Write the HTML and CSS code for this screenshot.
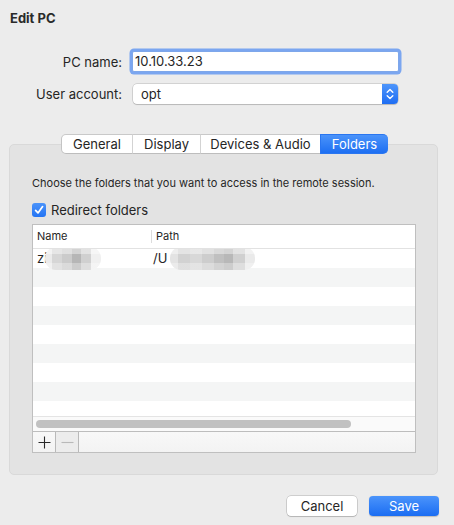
FILE: index.html
```html
<!DOCTYPE html>
<html>
<head>
<meta charset="utf-8">
<link rel="stylesheet" href="styles.css">
</head>
<body>
<div class="window">
  <div class="title">Edit PC</div>
  <div class="form">
    <div class="row">
      <span class="lbl">PC name:</span>
      <div class="input">10.10.33.23</div>
    </div>
    <div class="row row2">
      <span class="lbl">User account:</span>
      <div class="popup">
        <span class="popup-text">opt</span>
        <span class="stepper">
          <svg width="16" height="20" viewBox="0 0 16 20">
            <path d="M5.2 8.2 L8 5.6 L10.8 8.2" fill="none" stroke="#fff" stroke-width="1.4" stroke-linecap="round" stroke-linejoin="round"/>
            <path d="M5.2 11.8 L8 14.4 L10.8 11.8" fill="none" stroke="#fff" stroke-width="1.4" stroke-linecap="round" stroke-linejoin="round"/>
          </svg>
        </span>
      </div>
    </div>
  </div>

  <div class="tabs">
    <div class="tab t-general">General</div>
    <div class="tab t-display">Display</div>
    <div class="tab t-devices">Devices &amp; Audio</div>
    <div class="tab t-folders active">Folders</div>
  </div>

  <div class="panel">
    <div class="desc">Choose the folders that you want to access in the remote session.</div>
    <div class="check-row">
      <span class="checkbox">
        <svg width="14" height="14" viewBox="0 0 14 14">
          <path d="M3.6 7.3 L6 9.9 L10.6 3.6" fill="none" stroke="#fff" stroke-width="1.7" stroke-linecap="round" stroke-linejoin="round"/>
        </svg>
      </span>
      <span class="check-label">Redirect folders</span>
    </div>

    <div class="table">
      <div class="thead">
        <div class="th th-name">Name</div>
        <div class="th th-path">Path</div>
      </div>
      <div class="tbody">
        <div class="tr">
          <div class="td td-name">zi<span class="blur blur1"></span></div>
          <div class="td td-path">/U<span class="blur blur2"></span></div>
        </div>
        <div class="tr alt"></div>
        <div class="tr"></div>
        <div class="tr alt"></div>
        <div class="tr"></div>
        <div class="tr alt"></div>
        <div class="tr"></div>
        <div class="tr alt"></div>
        <div class="tr"></div>
      </div>
      <div class="hscroll"><div class="thumb"></div></div>
      <div class="bar">
        <div class="bbtn plus">
          <svg width="13" height="13" viewBox="0 0 13 13"><path d="M6.5 0.5 V12.5 M0.5 6.5 H12.5" stroke="#2a2a2a" stroke-width="1.1"/></svg>
        </div>
        <div class="bbtn minus">
          <svg width="13" height="13" viewBox="0 0 13 13"><path d="M0.5 6.5 H12.5" stroke="#b9b9b9" stroke-width="1.1"/></svg>
        </div>
      </div>
    </div>
  </div>

  <div class="buttons">
    <div class="btn cancel">Cancel</div>
    <div class="btn save">Save</div>
  </div>
</div>
</body>
</html>
```

FILE: styles.css
```css
* { box-sizing: border-box; }
html, body {
  margin: 0;
  padding: 0;
  background: #ececec;
}
body {
  width: 454px;
  height: 525px;
  overflow: hidden;
  font-family: Inter, Roboto, "Liberation Sans", sans-serif;
  color: #252525;
  font-size: 13px;
}
.window {
  display: flex;
  flex-direction: column;
}
.title {
  padding: 10px 0 0 10px;
  height: 26px;
  line-height: 16px;
  font-weight: bold;
  font-size: 13px;
  color: #2a2a2a;
}
.form {
  margin-top: 25px;
  display: flex;
  flex-direction: column;
}
.row {
  display: flex;
  align-items: center;
  height: 21px;
}
.row2 {
  margin-top: 12px;
  height: 20px;
}
.lbl {
  width: 122px;
  text-align: right;
  line-height: 16px;
}
.input {
  margin-left: 10px;
  width: 267px;
  height: 21px;
  background: #fff;
  border: 1px solid #7ea7ea;
  box-shadow: 0 0 0 2.5px #7ba6f0;
  border-radius: 2px;
  padding-left: 2px;
  line-height: 19px;
}
.popup {
  margin-left: 11px;
  width: 265px;
  height: 20px;
  background: #fff;
  border-radius: 4px;
  box-shadow: 0 0 0 0.5px rgba(0,0,0,0.22), 0 1px 1px rgba(0,0,0,0.12);
  display: flex;
  align-items: center;
  justify-content: space-between;
}
.popup-text {
  padding-left: 8px;
  line-height: 16px;
}
.stepper {
  width: 16px;
  height: 20px;
  background: linear-gradient(#4d95fb, #1f6ef3);
  border-radius: 0 4px 4px 0;
  display: flex;
}
.tabs {
  margin-top: 30px;
  margin-left: 61px;
  display: flex;
  position: relative;
  z-index: 2;
  height: 20px;
}
.tab {
  height: 20px;
  line-height: 19px;
  text-align: center;
  background: #fff;
  border-top: 1px solid #c9c9c9;
  border-bottom: 1px solid #bdbdbd;
  border-left: 1px solid #d3d3d3;
  font-size: 13px;
}
.t-general { width: 71px; border-radius: 5px 0 0 5px; border-left: 1px solid #c4c4c4; }
.t-display { width: 68px; }
.t-devices { width: 120px; }
.t-folders { width: 68px; border-radius: 0 5px 5px 0; }
.tab.active {
  background: linear-gradient(#4a93fa, #1d6ff2);
  color: #fff;
  border-color: #2a76f0;
  border-left-color: #2a76f0;
}
.panel {
  margin: -10px 16px 0 9px;
  height: 331px;
  background: #e3e3e3;
  border: 1px solid #d9d9d9;
  border-radius: 5px;
  padding: 31px 21px 0 22px;
}
.desc {
  font-size: 11px;
  line-height: 14px;
  color: #262626;
}
.check-row {
  margin-top: 12px;
  display: flex;
  align-items: center;
  height: 16px;
}
.checkbox {
  width: 14px;
  height: 14px;
  border-radius: 3px;
  background: linear-gradient(#4a93fa, #2474f3);
  display: flex;
}
.check-label {
  margin-left: 5px;
  line-height: 16px;
  font-size: 13px;
}
.table {
  margin-top: 6px;
  width: 384px;
  height: 229px;
  border: 1px solid #bfbfbf;
  background: #fff;
  display: flex;
  flex-direction: column;
}
.thead {
  height: 24px;
  flex: none;
  display: flex;
  border-bottom: 1px solid #e2e2e2;
  background: #fff;
}
.th {
  font-size: 11px;
  line-height: 23px;
  position: relative;
}
.th-name { width: 118px; padding-left: 4px; }
.th-path {
  padding-left: 4px;
  border-left: 1px solid #dcdcdc;
  margin: 5px 0 5px 0;
  line-height: 13px;
}
.tbody {
  height: 167px;
  flex: none;
  overflow: hidden;
}
.tr {
  height: 19px;
  display: flex;
  background: #fff;
}
.tr.alt { background: #f4f5f5; }
.td {
  position: relative;
  font-size: 13px;
  line-height: 19px;
}
.td-name { width: 119px; padding-left: 4px; }
.td-path { padding-left: 1px; }
.blur {
  position: absolute;
  top: -2px;
  height: 23px;
  border-radius: 11px;
  filter: blur(0.6px);
  background:
    linear-gradient(to bottom, rgba(255,255,255,0.4) 0 30%, rgba(255,255,255,0) 30% 70%, rgba(255,255,255,0.3) 70%),
    linear-gradient(to right, #ebebeb 0 12%, #d6d6d6 12% 30%, #cbcbcb 30% 48%, #b6b6b6 48% 64%, #d0d0d0 64% 82%, #f0f0f0 82%);
}
.blur1 { left: 12px; width: 56px; }
.blur2 {
  left: 18px;
  width: 85px;
  background:
    linear-gradient(to bottom, rgba(255,255,255,0.4) 0 30%, rgba(255,255,255,0) 30% 70%, rgba(255,255,255,0.3) 70%),
    linear-gradient(to right, #e3e3e3 0 10%, #d2d2d2 10% 24%, #d8d8d8 24% 38%, #cdcdcd 38% 52%, #c0c0c0 52% 64%, #b8b8b8 64% 74%, #d0d0d0 74% 88%, #eaeaea 88%);
}
.hscroll {
  height: 15px;
  flex: none;
  border-top: 1px solid #e4e4e4;
  background: #fafafa;
  padding: 3px 0 0 3px;
}
.thumb {
  width: 315px;
  height: 8px;
  border-radius: 4px;
  background: #c1c1c1;
}
.bar {
  flex: 1;
  border-top: 1px solid #bdbdbd;
  background: linear-gradient(#f8f8f8, #f3f3f3);
  display: flex;
}
.bbtn {
  width: 23px;
  border-right: 1px solid #b9b9b9;
  display: flex;
  align-items: center;
  justify-content: center;
}
.bbtn.minus { background: #ececec; }
.buttons {
  margin-top: 21px;
  display: flex;
  justify-content: flex-end;
  padding-right: 15px;
  gap: 12px;
}
.btn {
  width: 70px;
  height: 20px;
  border-radius: 4px;
  text-align: center;
  line-height: 20px;
  font-size: 13px;
}
.cancel {
  background: #fff;
  box-shadow: 0 0 0 0.5px rgba(0,0,0,0.25), 0 1px 1px rgba(0,0,0,0.12);
  color: #262626;
}
.save {
  background: linear-gradient(#4b94fb, #1b6df2);
  color: #fff;
  box-shadow: 0 0.5px 1px rgba(0,0,0,0.2);
}
```
